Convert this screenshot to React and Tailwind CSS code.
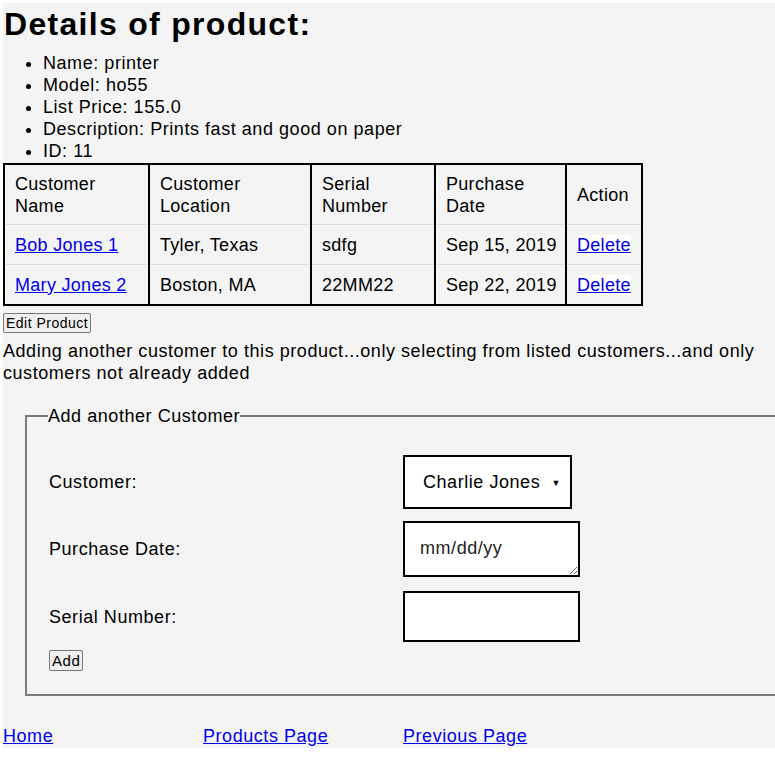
import React from 'react';

const purchases = [
  { name: 'Bob Jones 1', location: 'Tyler, Texas', serial: 'sdfg', date: 'Sep 15, 2019' },
  { name: 'Mary Jones 2', location: 'Boston, MA', serial: '22MM22', date: 'Sep 22, 2019' },
];

const font = "font-['Liberation_Sans',Arial,sans-serif]";

export default function App() {
  return (
    <div className={`min-h-screen bg-white pt-[3px] pl-[3px] overflow-hidden text-black ${font}`}>
      <div className="bg-[#f4f4f4] h-[745px] text-[18px] leading-[22px] tracking-[0.55px]">
        <h1 className="text-[32px] font-bold leading-[42px] mb-[7px] pl-[1px] tracking-[1.3px]">Details of product:</h1>
        <ul className="list-disc pl-[40px]">
          <li>Name: printer</li>
          <li>Model: ho55</li>
          <li>List Price: 155.0</li>
          <li>Description: Prints fast and good on paper</li>
          <li>ID: 11</li>
        </ul>

        {/* purchases */}
        <table className="mt-[1px] border-collapse border-2 border-black table-fixed w-[640px] text-left tracking-[0.3px]">
          <thead>
            <tr>
              <th className="w-[145px] font-normal px-[10px] py-[7.5px] border-r-2 border-black">Customer Name</th>
              <th className="w-[162px] font-normal px-[10px] py-[7.5px] border-r-2 border-black">Customer Location</th>
              <th className="w-[124px] font-normal px-[10px] py-[7.5px] border-r-2 border-black">Serial Number</th>
              <th className="w-[131px] font-normal px-[10px] py-[7.5px] border-r-2 border-black">Purchase Date</th>
              <th className="font-normal px-[10px] py-[7.5px]">Action</th>
            </tr>
          </thead>
          <tbody>
            {purchases.map(p => (
              <tr key={p.name} className="border-t border-[#dddddd] whitespace-nowrap">
                <td className="px-[10px] py-[8.5px] border-r-2 border-r-black">
                  <a href="#" className="text-[#0000ee] underline">{p.name}</a>
                </td>
                <td className="px-[10px] py-[8.5px] border-r-2 border-r-black">{p.location}</td>
                <td className="px-[10px] py-[8.5px] border-r-2 border-r-black">{p.serial}</td>
                <td className="px-[10px] py-[8.5px] border-r-2 border-r-black">{p.date}</td>
                <td className="px-[10px] py-[8.5px]">
                  <a href="#" className="text-[#0000ee] underline bg-white">Delete</a>
                </td>
              </tr>
            ))}
          </tbody>
        </table>

        <button className="mt-[7px] h-[20px] px-[2px] text-[14px] leading-[16px] tracking-[0.5px] bg-[#efefef] border border-[#767676] rounded-[2px]">
          Edit Product
        </button>
        <p className="mt-[7px] pr-[10px]">
          Adding another customer to this product...only selecting from listed customers...and only customers not already added
        </p>

        {/* add customer form */}
        <fieldset className="mt-[21px] ml-[22px] w-[800px] border-2 border-[#7a7a7a] border-r-0 pl-[22px] pt-[28px] pb-[23px]">
          <legend className="px-0 -ml-[1px]">Add another Customer</legend>
          <div className="grid grid-cols-[354px_auto] items-center">
            <label>Customer:</label>
            <div className="relative w-[169px] h-[54px] bg-white border-2 border-black">
              <select className="w-full h-full appearance-none pl-[18px] outline-none bg-transparent">
                <option>Charlie Jones</option>
              </select>
              <span className="absolute right-[9px] top-[15px] text-[9px] pointer-events-none">▼</span>
            </div>

            <label className="mt-[12px]">Purchase Date:</label>
            <textarea
              placeholder="mm/dd/yy"
              className="mt-[12px] w-[177px] h-[56px] bg-white border-2 border-black pl-[15px] pr-[70px] pt-[14px] overflow-hidden placeholder:text-[#222] outline-none"
            />

            <label className="mt-[14px]">Serial Number:</label>
            <input className="mt-[14px] w-[177px] h-[51px] bg-white border-2 border-black outline-none" />
          </div>
          <button className="mt-[8px] h-[21px] px-[2px] text-[15px] leading-[17px] bg-[#efefef] border border-[#767676] rounded-[2px]">
            Add
          </button>
        </fieldset>

        <nav className="mt-[29px] grid grid-cols-[200px_200px_200px]">
          <a href="#" className="text-[#0000ee] underline justify-self-start">Home</a>
          <a href="#" className="text-[#0000ee] underline justify-self-start">Products Page</a>
          <a href="#" className="text-[#0000ee] underline justify-self-start">Previous Page</a>
        </nav>
      </div>
    </div>
  );
}
